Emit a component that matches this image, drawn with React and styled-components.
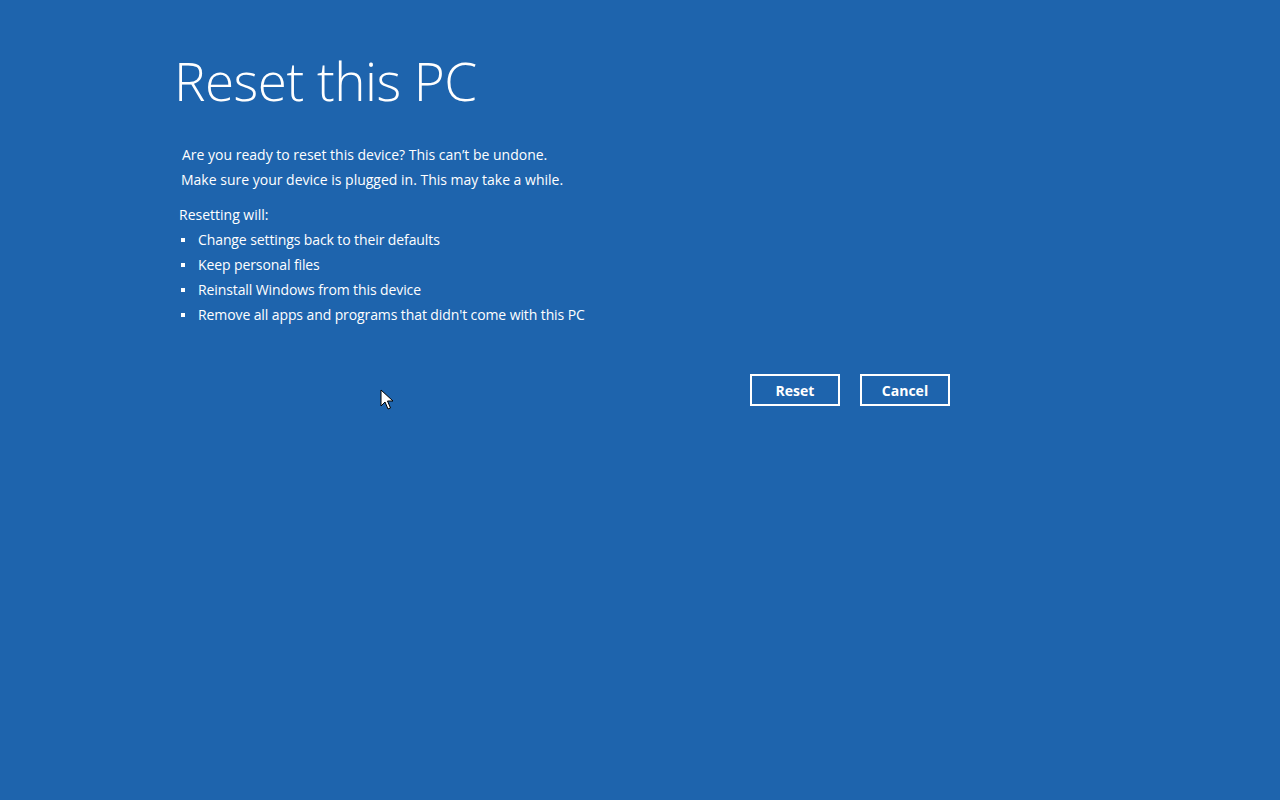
import React from 'react'
import styled, { createGlobalStyle } from 'styled-components'

const GlobalStyle = createGlobalStyle`
    html, body {
        margin: 0;
        padding: 0;
        background: #1e64ad;
    }
    body {
        font-family: "Open Sans", "Noto Sans", sans-serif;
        color: #ffffff;
    }
`

function Cursor() {
    return (
        <Pointer width="14" height="22" viewBox="0 0 14 22">
            <path d="M1 1 L1 17 L5 13 L8 20 L10.5 19 L7.5 12 L13 12 Z"
                fill="#ffffff" stroke="#000000" strokeWidth="1" strokeLinejoin="round" />
        </Pointer>
    )
}

function App() {
    return (
        <Screen>
            <GlobalStyle />
            <Panel>
                <Title>Reset this PC</Title>
                <Intro>
                    <Line indent={8}>Are you ready to reset this device? This can’t be undone.</Line>
                    <Line indent={7}>Make sure your device is plugged in. This may take a while.</Line>
                </Intro>
                <Details>
                    <Line indent={5}>Resetting will:</Line>
                    <Bullets>
                        <Bullet>Change settings back to their defaults</Bullet>
                        <Bullet>Keep personal files</Bullet>
                        <Bullet>Reinstall Windows from this device</Bullet>
                        <Bullet>Remove all apps and programs that didn't come with this PC</Bullet>
                    </Bullets>
                </Details>
                <Actions>
                    <Button>Reset</Button>
                    <Button>Cancel</Button>
                </Actions>
            </Panel>
            <Cursor />
        </Screen>
    )
}

export default App

const Screen = styled.div`
    position: relative;
    width: 1280px;
    height: 800px;
    background: #1e64ad;
    overflow: hidden;
`

const Panel = styled.div`
    width: 776px;
    padding: 45px 0 0 174px;
    display: flex;
    flex-direction: column;
`

const Title = styled.h1`
    margin: 0;
    font-family: "Open Sans", sans-serif;
    font-weight: 300;
    font-size: 53px;
    line-height: 72px;
    letter-spacing: -0.5px;
`

const Intro = styled.div`
    margin-top: 25px;
    display: flex;
    flex-direction: column;
`

const Line = styled.div`
    padding-left: ${props => props.indent || 0}px;
    font-size: 14px;
    line-height: 25px;
`

const Details = styled.div`
    margin-top: 10px;
    display: flex;
    flex-direction: column;
`

const Bullets = styled.ul`
    list-style: none;
    margin: 0;
    padding: 0 0 0 6px;
`

const Bullet = styled.li`
    position: relative;
    padding-left: 18px;
    font-size: 14px;
    line-height: 25px;
    letter-spacing: -0.1px;

    &:before {
        content: "";
        position: absolute;
        left: 1px;
        top: 11px;
        width: 4px;
        height: 4px;
        background: #ffffff;
    }
`

const Actions = styled.div`
    margin-top: 47px;
    display: flex;
    justify-content: flex-end;
    gap: 20px;
`

const Button = styled.button`
    width: 90px;
    height: 32px;
    box-sizing: border-box;
    border: 2px solid #ffffff;
    background: transparent;
    color: #ffffff;
    font-family: "Open Sans", sans-serif;
    font-weight: 700;
    font-size: 14px;
    padding: 0;
    cursor: pointer;
`

const Pointer = styled.svg`
    position: absolute;
    left: 380px;
    top: 389px;
`
